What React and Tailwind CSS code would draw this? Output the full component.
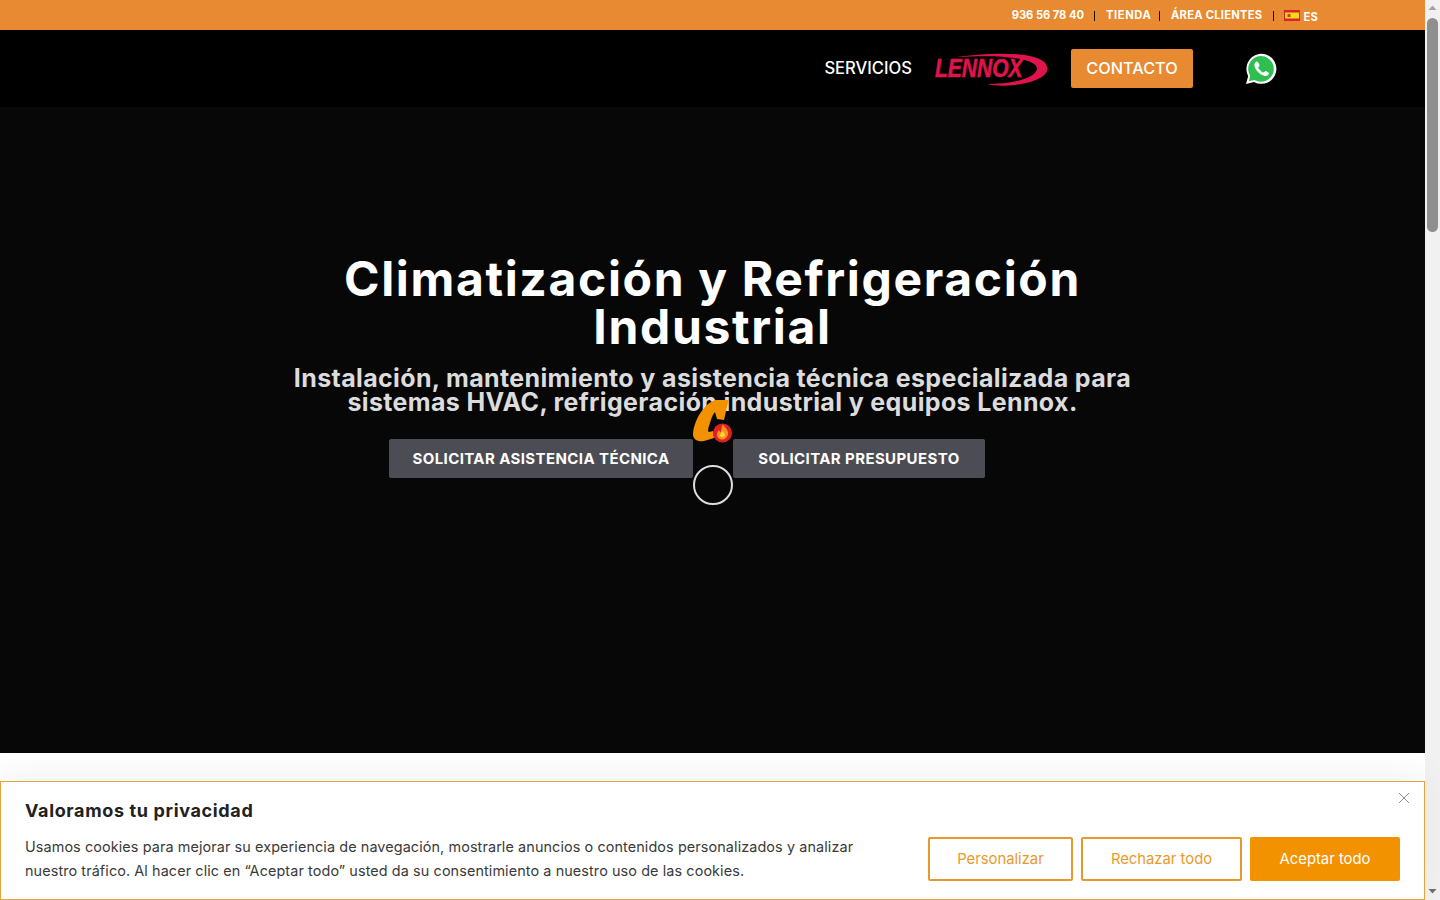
import React from "react";

const F = { fontFamily: '"Inter","Liberation Sans",sans-serif' };

function Lennox() {
  return (
    <div className="relative w-[116px] h-[36px]">
      <svg className="absolute inset-0" width="116" height="36" viewBox="0 0 116 36">
        <path d="M22 6 C50 2 95 0 108 10 C118 18 112 30 80 34 C70 35 60 35 52 33 C75 33 100 28 102 18 C103 8 70 3 22 6Z" fill="#e0144c" />
      </svg>
      <span className="absolute left-0 top-[5px] text-[#e0144c] text-[25px] leading-[24px] font-bold italic origin-left scale-x-[0.84] [-webkit-text-stroke:0.5px_#e0144c]" style={{ fontFamily: '"Liberation Sans",sans-serif' }}>LENNOX</span>
    </div>
  );
}

function Whatsapp() {
  return (
    <svg width="32" height="32" viewBox="0 0 32 32">
      <path d="M1 31 L3.2 23 A15 15 0 1 1 9 28.9 Z" fill="#fff" />
      <path d="M3.8 28.2 L5.2 22.8 A12.8 12.8 0 1 1 9.6 27 Z" fill="#2fbf50" />
      <path d="M11.6 8.6 C10.4 9 9.2 10.6 9.4 12.6 C9.8 16.6 14.6 22 19.8 23 C22 23.4 23.8 21.8 24 20.2 C24.1 19.5 21.2 17.8 20.4 17.9 C19.6 18 19.2 19.6 18.4 19.6 C17 19.5 13.6 16.2 13.2 14.6 C13.1 13.8 14.5 13.2 14.6 12.4 C14.7 11.6 12.6 8.3 11.6 8.6Z" fill="#fff" />
    </svg>
  );
}

function Loader() {
  return (
    <div className="absolute left-[692px] top-[398px] w-[42px] flex flex-col items-center">
      <svg width="42" height="46" viewBox="0 0 42 46">
        <path d="M36.5 2 L24 2 C13 4 2 22 1 36 C1 42 6 44 12 43 L22 40 L21 33 L17 34 C15.5 34 16 30 18 25 C19 21 21 16 23 14 L25 21 L32 22 Z" fill="#f39200" />
        <circle cx="30.5" cy="35" r="9.5" fill="#e01f26" />
        <path d="M30.5 26.5 C33 29 36.5 32 36 36 C35.5 39.5 33 41.5 30.5 41.5 C27.5 41.5 25 39.5 25 36.5 C25 34.5 26 33.5 27 32 C27.5 33.5 28 34 28.7 34 C29.5 32 29.5 29 30.5 26.5Z" fill="#f7941d" />
        <path d="M30.5 33 C32 35 33.2 36 33 37.6 C32.6 39.4 28.5 39.6 28 37.4 C28 36 29.8 35 30.5 33Z" fill="#fdd835" />
      </svg>
      <div className="mt-[21px] w-[40px] h-[40px] rounded-full border-2 border-[#dcdcdc]" />
    </div>
  );
}

function Scrollbar() {
  return (
    <div className="w-[15px] h-full bg-[#f1f1f1] flex flex-col items-center shrink-0 relative">
      <svg width="15" height="17" viewBox="0 0 15 17" className="shrink-0"><path d="M3.5 10 L7.5 5.5 L11.5 10Z" fill="#a3a3a3" /></svg>
      <div className="w-[11px] h-[214px] mt-[1px] rounded-[6px] bg-[#8f8f8f]" />
      <svg width="15" height="17" viewBox="0 0 15 17" className="absolute bottom-0 left-0"><path d="M3.5 6 L7.5 10.5 L11.5 6Z" fill="#6f6f6f" /></svg>
    </div>
  );
}

function Sep() {
  return <span className="w-px h-[10px] bg-black/90" />;
}

function CookieBanner() {
  return (
    <div className="absolute left-0 bottom-0 w-[1425px] h-[119px] bg-white border border-[#e8a33d] shadow-[0_-8px_30px_rgba(0,0,0,0.05)] pl-[24px] pr-[24px] pt-[17px] text-[#212121]">
      <button className="absolute right-[14px] top-[10px] text-[#8d8f99]">
        <svg width="12" height="12" viewBox="0 0 12 12"><path d="M1 1 L11 11 M11 1 L1 11" stroke="currentColor" strokeWidth="1" fill="none" /></svg>
      </button>
      <h2 className="text-[18px] leading-[24px] font-bold tracking-[0.65px] text-[#212121]">Valoramos tu privacidad</h2>
      <div className="flex items-start justify-between mt-[13px]">
        <p className="w-[860px] text-[14.4px] leading-[24px] tracking-[0.1px] text-[#3a3a3a] mt-[-1px] whitespace-nowrap">
          Usamos cookies para mejorar su experiencia de navegación, mostrarle anuncios o contenidos personalizados y analizar<br />
          nuestro tráfico. Al hacer clic en “Aceptar todo” usted da su consentimiento a nuestro uso de las cookies.
        </p>
        <div className="flex gap-[8px] mt-[1px]">
          <button className="w-[145px] h-[44px] rounded-[2px] border-2 border-[#e69a2e] bg-white text-[#e69a2e] text-[14.8px]">Personalizar</button>
          <button className="w-[161px] h-[44px] rounded-[2px] border-2 border-[#e69a2e] bg-white text-[#e69a2e] text-[14.8px]">Rechazar todo</button>
          <button className="w-[150px] h-[44px] rounded-[2px] bg-[#f39200] text-white text-[14.8px]">Aceptar todo</button>
        </div>
      </div>
    </div>
  );
}

export default function App() {
  return (
    <div className="relative w-[1440px] h-[900px] overflow-hidden flex bg-white" style={F}>
      <div className="w-[1425px] shrink-0 flex flex-col">
        <div className="h-[30px] pt-[1px] bg-[#e88a31] flex items-center justify-end gap-[10.5px] pr-[107px] text-white text-[11.2px] tracking-[0.25px] font-bold">
          <span className="tracking-[-0.05px]">936 56 78 40</span>
          <Sep />
          <span className="tracking-[0.6px] mr-[-2.5px]">TIENDA</span>
          <Sep />
          <span>ÁREA CLIENTES</span>
          <Sep />
          <span className="flex items-center gap-[3px]">
            <svg width="16" height="11" viewBox="0 0 16 11">
              <rect width="16" height="11" fill="#d8232a" />
              <rect x="1" y="2.5" width="14" height="6" fill="#f9d616" />
              <rect x="3.5" y="4" width="3" height="3" fill="#b5472a" />
            </svg>
            <span className="mt-[4px]">ES</span>
          </span>
        </div>
        <nav className="h-[77px] bg-black flex items-center justify-end pr-[148px] text-white">
          <span className="text-[16.6px] font-medium mt-[-1px]">SERVICIOS</span>
          <div className="ml-[23px] mr-[20px]"><Lennox /></div>
          <span className="w-[122px] h-[39px] rounded-[2px] bg-[#e88a31] flex items-center justify-center text-[16.3px] font-medium pb-[1px]">CONTACTO</span>
          <div className="ml-[52px]"><Whatsapp /></div>
        </nav>
        <main className="h-[646px] bg-[#070708] flex flex-col items-center pt-[148px] text-center">
          <h1 className="text-white text-[48px] leading-[48px] font-bold tracking-[1.65px]">
            Climatización y Refrigeración<br />Industrial
          </h1>
          <p className="mt-[15px] text-[#dcdcdc] text-[25px] leading-[24px] font-bold tracking-[0.36px]">
            Instalación, mantenimiento y asistencia técnica especializada para<br />
            sistemas HVAC, refrigeración industrial y equipos Lennox.
          </p>
          <div className="flex gap-[40px] mt-[25px] mr-[51px]">
            <a className="w-[304px] h-[39px] rounded-[2px] bg-[#4c4d54] text-white text-[15px] tracking-[0.4px] font-bold flex items-center justify-center pt-[1px]">SOLICITAR ASISTENCIA TÉCNICA</a>
            <a className="w-[252px] h-[39px] rounded-[2px] bg-[#4c4d54] text-white text-[15px] tracking-[0.4px] font-bold flex items-center justify-center pt-[1px]">SOLICITAR PRESUPUESTO</a>
          </div>
        </main>
        <div className="flex-1 bg-white" />
      </div>
      <Scrollbar />
      <Loader />
      <CookieBanner />
    </div>
  );
}
